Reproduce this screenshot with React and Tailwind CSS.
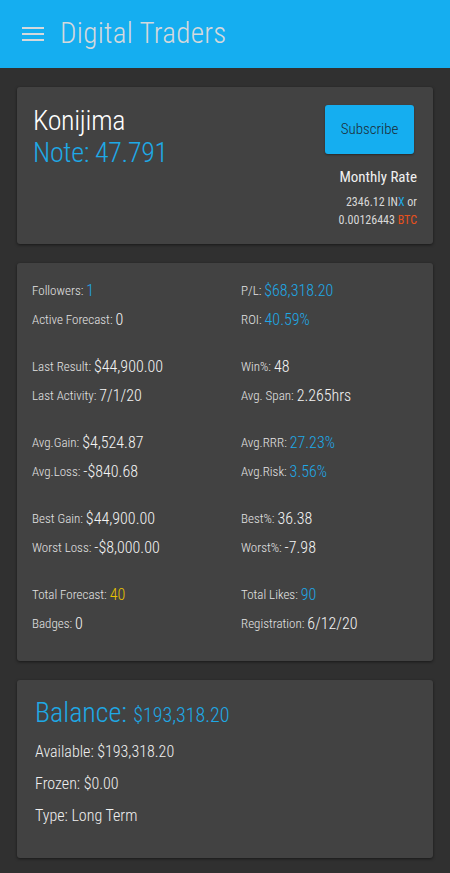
import React from 'react';

const FONT = { fontFamily: '"Roboto Condensed", "Roboto", sans-serif' };

function Stat({ label, value, tone = 'white' }) {
  const color =
    tone === 'blue' ? 'text-[#1ea9e6]' : tone === 'yellow' ? 'text-[#e8c400]' : 'text-[#f4f4f4]';
  return (
    <div className="flex h-[29px] items-center whitespace-nowrap">
      <span className="text-[13px] font-light text-[#e4e4e4]">{label}:&nbsp;</span>
      <span className={`text-[16px] font-light ${color}`}>{value}</span>
    </div>
  );
}

const GROUPS = [
  [
    ['Followers', '1', 'blue'],
    ['P/L', '$68,318.20', 'blue'],
    ['Active Forecast', '0'],
    ['ROI', '40.59%', 'blue'],
  ],
  [
    ['Last Result', '$44,900.00'],
    ['Win%', '48'],
    ['Last Activity', '7/1/20'],
    ['Avg. Span', '2.265hrs'],
  ],
  [
    ['Avg.Gain', '$4,524.87'],
    ['Avg.RRR', '27.23%', 'blue'],
    ['Avg.Loss', '-$840.68'],
    ['Avg.Risk', '3.56%', 'blue'],
  ],
  [
    ['Best Gain', '$44,900.00'],
    ['Best%', '36.38'],
    ['Worst Loss', '-$8,000.00'],
    ['Worst%', '-7.98'],
  ],
  [
    ['Total Forecast', '40', 'yellow'],
    ['Total Likes', '90', 'blue'],
    ['Badges', '0'],
    ['Registration', '6/12/20'],
  ],
];

export default function App() {
  return (
    <div className="min-h-[873px] bg-[#303030] pb-4" style={FONT}>
      <header className="flex h-[68px] items-center bg-[#15aef0] px-[22px]">
        <svg width="22" height="16" viewBox="0 0 22 16" className="mr-[16px]">
          <rect x="0" y="1" width="22" height="2" fill="#d5d9dc" />
          <rect x="0" y="7" width="22" height="2" fill="#d5d9dc" />
          <rect x="0" y="13" width="22" height="2" fill="#d5d9dc" />
        </svg>
        <h1 className="text-[29px] font-light tracking-[0.01em] text-[#d5d9dc]">Digital Traders</h1>
      </header>

      <div className="flex flex-col gap-[19px] px-[17px] pt-[19px]">
        <section className="flex justify-between rounded-[3px] bg-[#424242] px-[16px] pb-[15px] pt-[18px] shadow-[0_1px_3px_rgba(0,0,0,0.5)]">
          <div className="flex flex-col tracking-[-0.02em]">
            <span className="text-[28px] font-light leading-[32px] text-white">Konijima</span>
            <span className="text-[28px] font-light leading-[32px] text-[#1ea9e6]">Note: 47.791</span>
          </div>
          <div className="flex flex-col items-end">
            <button className="mr-[3px] h-[49px] w-[89px] rounded-[3px] bg-[#15aef0] text-[15px] font-light text-[#1c2a33] shadow-[0_1px_2px_rgba(0,0,0,0.4)]">
              Subscribe
            </button>
            <span className="mt-[12px] text-[15px] text-[#f0f0f0]">Monthly Rate</span>
            <span className="mt-[4px] text-[12px] text-[#d8d8d8]">
              2346.12 IN<span className="text-[#1ea9e6]">X</span> or
            </span>
            <span className="text-[12px] text-[#d8d8d8]">
              0.00126443 <span className="text-[#e8501c]">BTC</span>
            </span>
          </div>
        </section>

        <section className="flex flex-col gap-[18px] rounded-[3px] bg-[#424242] px-[15px] pb-[22px] pt-[14px] shadow-[0_1px_3px_rgba(0,0,0,0.5)]">
          {GROUPS.map((g, i) => (
            <div key={i} className="grid grid-cols-[209px_1fr]">
              {g.map(([label, value, tone]) => (
                <Stat key={label} label={label} value={value} tone={tone} />
              ))}
            </div>
          ))}
        </section>

        <section className="flex flex-col rounded-[3px] bg-[#424242] px-[18px] pb-[26px] pt-[12px] shadow-[0_1px_3px_rgba(0,0,0,0.5)]">
          <div className="flex items-baseline font-light text-[#1ea9e6]">
            <span className="text-[28px]">Balance:&nbsp;</span>
            <span className="text-[20px]">$193,318.20</span>
          </div>
          <span className="mt-[2px] text-[16px] font-light leading-[32px] text-[#f0f0f0]">Available: $193,318.20</span>
          <span className="text-[16px] font-light leading-[32px] text-[#f0f0f0]">Frozen: $0.00</span>
          <span className="text-[16px] font-light leading-[32px] text-[#f0f0f0]">Type: Long Term</span>
        </section>
      </div>
    </div>
  );
}
